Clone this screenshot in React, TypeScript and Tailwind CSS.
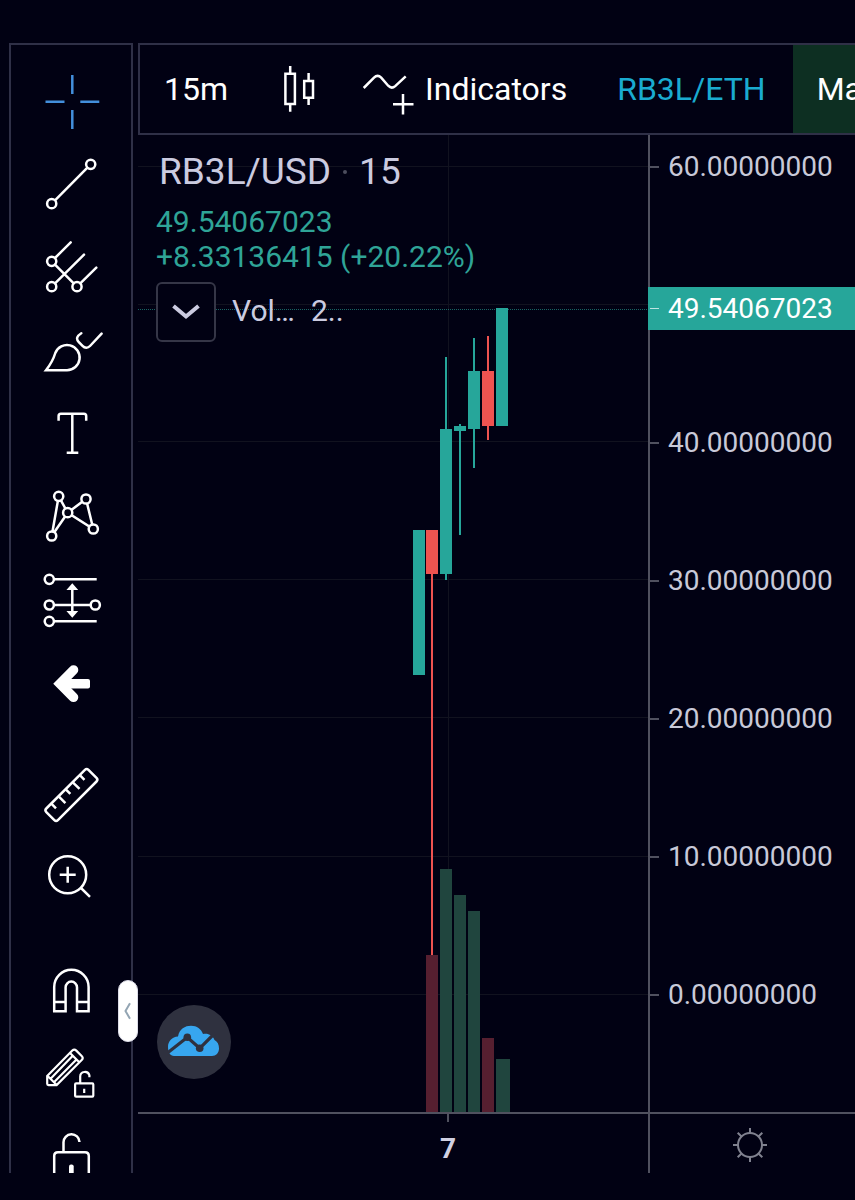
import { FC, ReactNode } from "react";

interface IconProps {
  children: ReactNode;
}

const Icon: FC<IconProps> = ({ children }) => (
  <svg
    viewBox="0 0 64 64"
    fill="none"
    stroke="currentColor"
    strokeWidth="2.5"
    aria-hidden="true"
    className="size-16 shrink-0"
  >
    {children}
  </svg>
);

interface Tool {
  label: string;
  active?: boolean;
  icon: ReactNode;
}

const drawingTools: Tool[] = [
  {
    label: "Cross",
    active: true,
    icon: <path d="M33.3 6v19M33.3 41v19M6.5 32.7h19M41.3 32.7h19" />,
  },
  {
    label: "Trend line",
    icon: (
      <>
        <circle cx="51.7" cy="12.3" r="4.6" />
        <circle cx="12.7" cy="51.7" r="4.6" />
        <path d="M16 48.4 48.4 15.6" />
      </>
    ),
  },
  {
    label: "Pitchfork",
    icon: (
      <>
        <circle cx="12.7" cy="26.3" r="4.6" />
        <circle cx="12.7" cy="51.7" r="4.6" />
        <circle cx="38" cy="51.7" r="4.6" />
        <path
          strokeLinecap="round"
          d="M16 23 31.7 7.3M16 48.4 45 19.7M41.3 48.4 57.3 32.7M16 29.6 34.7 48.4"
        />
      </>
    ),
  },
  {
    label: "Brush",
    icon: (
      <>
        <path d="M7 52.2H28A12.6 12.6 0 1 0 16.3 35C14.5 41 11.5 46.5 7 52.2z" />
        <path
          strokeLinecap="round"
          d="M42.3 15.2C38 18 36.8 20.8 39.6 23.8L43.5 27.8C45.8 30.3 48.8 30.3 51 28L62.6 15.6"
        />
      </>
    ),
  },
  {
    label: "Text",
    icon: (
      <path d="M19.6 19.8V15q0-2.3 2.3-2.3h23q2.3 0 2.3 2.3v4.8M33.3 12.7v39M27.7 51.7h11.6" />
    ),
  },
  {
    label: "Pattern",
    icon: (
      <>
        <path d="M19.7 12.3 28.7 28.7 47 15 54.3 45 28.7 28.7 12.7 52z" />
        <g className="fill-[#010113]">
          <circle cx="19.7" cy="12.3" r="4.6" />
          <circle cx="28.7" cy="28.7" r="4.6" />
          <circle cx="47" cy="15" r="4.6" />
          <circle cx="54.3" cy="45" r="4.6" />
          <circle cx="12.7" cy="52" r="4.6" />
        </g>
      </>
    ),
  },
  {
    label: "Projection",
    icon: (
      <>
        <circle cx="10.3" cy="12.3" r="4.6" />
        <circle cx="10.3" cy="38" r="4.6" />
        <circle cx="56.3" cy="38" r="4.6" />
        <circle cx="10.3" cy="54.3" r="4.6" />
        <path d="M15 12.3h42.7M15 38h36.7M15 54.3h42.7M33.3 20v27" />
        <path
          fill="currentColor"
          stroke="none"
          d="m33.3 16.3 5.9 6.6H27.4zM33.3 50.7l5.9-6.6H27.4z"
        />
      </>
    ),
  },
  {
    label: "Arrow",
    icon: (
      <>
        <path strokeWidth="9.6" strokeLinecap="round" d="M34.5 20 21 33.7 34.5 47.3" />
        <rect x="22" y="29" width="29" height="9.4" rx="2" fill="currentColor" stroke="none" />
      </>
    ),
  },
];

const measureTools: Tool[] = [
  {
    label: "Measure",
    icon: (
      <g transform="translate(32.4 32) rotate(-45)">
        <rect x="-29.8" y="-8.2" width="59.6" height="16.4" rx="2.5" />
        <path d="M-20.3-8v6.5M-10-8v9.5M0-8v6.5M10-8v9.5M20-8v6.5" />
      </g>
    ),
  },
  {
    label: "Zoom in",
    icon: (
      <>
        <circle cx="28.7" cy="28.7" r="18.5" />
        <path d="M42 42 51 50.8M28.7 20.7v16M20.7 28.7h16" />
      </>
    ),
  },
];

const lockTools: Tool[] = [
  {
    label: "Magnet mode",
    icon: (
      <path d="M15.2 52.2V28a17.2 17.2 0 0 1 34.4 0v24.2H38V28.3a5.7 5.7 0 0 0-11.4 0v23.9zM15.2 43h11.4M38 43h11.6" />
    ),
  },
  {
    label: "Stay in drawing mode",
    icon: (
      <g strokeWidth="2.2">
        <path d="M8.2 34 33.3 8.6q2-2 4 0l5.4 5.4q2 2 0 4L17.6 43.1H9.500q-1.3 0-1.3-1.3zM8.4 33.8l9.4 9.2M31 11l9.3 9.3M11.800 36.500 33.500 14M15.200 40 37.500 17.500" />
        <rect x="36.1" y="41.4" width="18.2" height="13.3" rx="1" />
        <path d="M41.2 41v-6.5a4.7 4.7 0 0 1 9.2-1.2v1.9M45.2 46.7v4.4" />
      </g>
    ),
  },
  {
    label: "Lock all drawings",
    icon: (
      <>
        <path d="M15.2 64V31q0-3.8 3.8-3.8h27q3.8 0 3.8 3.8v33M24.5 27V17.5a8 8 0 0 1 16-.5" />
        <rect x="30" y="39.6" width="4.7" height="12" rx="2" fill="currentColor" stroke="none" />
      </>
    ),
  },
];

const ToolGroup: FC<{ tools: Tool[] }> = ({ tools }) => (
  <div className="flex flex-col gap-[19px]">
    {tools.map(({ label, active, icon }) => (
      <button
        key={label}
        type="button"
        aria-label={label}
        className={active ? "text-[#438fdc]" : "text-white"}
      >
        <Icon>{icon}</Icon>
      </button>
    ))}
  </div>
);

const Sidebar: FC = () => (
  <aside className="relative w-[124px] shrink-0">
    <div className="flex h-full flex-col items-center gap-[49px] overflow-hidden border-x-2 border-t-2 border-[#2f3047] pt-6">
      <ToolGroup tools={drawingTools} />
      <ToolGroup tools={measureTools} />
      <ToolGroup tools={lockTools} />
    </div>
    <button
      type="button"
      aria-label="Hide drawings toolbar"
      className="absolute -right-[5px] bottom-[131px] z-10 flex h-[62px] w-5 items-center justify-center rounded-full border border-[#dcdce8] bg-white text-[#93a5b3]"
    >
      <svg viewBox="0 0 8 18" fill="none" stroke="currentColor" strokeWidth="2" className="h-[18px] w-2">
        <path d="M6 1.2 1.5 9 6 16.800" />
      </svg>
    </button>
  </aside>
);

const Toolbar: FC = () => (
  <header className="flex h-[92px] items-center overflow-hidden border-y-2 border-l-2 border-[#2f3047] pl-6 text-[32px] text-white">
    <button type="button">15m</button>
    <button type="button" aria-label="Candles" className="ml-10">
      <Icon>
        <path d="M17.4 16.7h9.5V47h-9.5zM22.2 9v7.7M22.2 47v7.8M36.2 24H45v16.7h-8.800zM40.6 16v8M40.6 40.7V48" />
      </Icon>
    </button>
    <button type="button" className="ml-6 flex items-center gap-[5px]">
      <Icon>
        <path d="M7.7 31 18 20.7q3.6-3.6 7.2 0l7 8q3.4 3.6 7 .4L49.7 19.3M47 37v20.5M37 47.2h20.5" />
      </Icon>
      Indicators
    </button>
    <button type="button" className="ml-[50px] text-[#1aabd0]">
      RB3L/ETH
    </button>
    <button type="button" className="ml-[27px] h-full flex-1 overflow-hidden bg-[#0d2f22] pl-6 text-left">
      Ma
    </button>
  </header>
);

const TEAL = "#26a69a";
const RED = "#ef5350";

// pixel rows inside the plot: body top/bottom, wick top/bottom, volume top
const candles = [
  { x: 275, top: 395, bottom: 540, high: 395, low: 540, volume: null, up: true },
  { x: 288, top: 395, bottom: 439, high: 395, low: 820, volume: 820, up: false },
  { x: 302, top: 294, bottom: 439, high: 222, low: 445, volume: 734, up: true },
  { x: 316, top: 291, bottom: 296, high: 289, low: 400, volume: 760, up: true },
  { x: 330, top: 236, bottom: 294, high: 203, low: 333, volume: 776, up: true },
  { x: 344, top: 236, bottom: 291, high: 201, low: 305, volume: 903, up: false },
  { x: 358, top: 173, bottom: 291, high: 173, low: 291, volume: 924, up: true },
];

const gridRows = [32, 170, 307, 445, 583, 722, 860];

const Plot: FC = () => (
  <svg className="block h-full w-full" aria-label="RB3L/USD price chart">
    <g stroke="#11121f">
      {gridRows.map((y) => (
        <line key={y} x1="0" x2="100%" y1={y - 0.5} y2={y - 0.5} />
      ))}
      <line x1="310.5" x2="310.5" y1="0" y2="100%" />
    </g>
    <line x1="0" x2="100%" y1="174.5" y2="174.5" stroke={TEAL} strokeOpacity="0.6" strokeDasharray="1 1" />
    {candles.map(({ x, top, bottom, high, low, volume, up }, i) => (
      <g key={x} fill={up ? TEAL : RED}>
        {volume && (
          <rect
            x={x}
            y={volume}
            width={i === candles.length - 1 ? 14 : 12}
            height={977 - volume}
            fill={up ? "#20453e" : "#561f30"}
          />
        )}
        <rect x={x + 5} y={high} width="2" height={low - high} />
        <rect x={x} y={top} width="12" height={bottom - top} />
      </g>
    ))}
  </svg>
);

const Legend: FC = () => (
  <div className="absolute left-[18px] top-[15px] text-[#cbcbe0]">
    <h1 className="flex items-center gap-3 pl-[3px] text-[37px] leading-[44px]">
      RB3L/USD <span className="size-1 rounded-full bg-[#4c4d5e]" /> 15
    </h1>
    <div className="mt-[10px] text-[30px] leading-[35px] text-[#2fa497]">
      <div>49.54067023</div>
      <div>+8.33136415 (+20.22%)</div>
    </div>
    <div className="mt-2 flex items-center gap-4 text-[30px]">
      <button
        type="button"
        aria-label="Collapse legend"
        className="flex size-[60px] items-center justify-center rounded-md border-2 border-[#353647] bg-[#010113]"
      >
        <svg viewBox="0 0 28 16" fill="none" stroke="currentColor" strokeWidth="4" className="h-4 w-7">
          <path d="m1.5 2 12.500 10.500L26.500 2" />
        </svg>
      </button>
      <span className="pb-1">Vol…</span>
      <span className="pb-1">2..</span>
    </div>
  </div>
);

const Watermark: FC = () => (
  <a
    href="#"
    aria-label="Charting by TradingView"
    className="absolute bottom-[33px] left-[19px] size-[74px] rounded-full bg-[#2f313f]"
  >
    <svg viewBox="0 0 74 74" className="size-full">
      <path
        fill="#37a6ef"
        d="M17 51c-4 0-6-4-6-9 0-6 4-10 10-10.5C22.5 24 28 20.8 34 20.8c6 0 10 3.2 12 8.2 5-1 9.500 1 11.500 6 3 1.500 4.500 4.500 4.500 8.500 0 4.500-3 7.500-7 7.500z"
      />
      <path d="M11 47.5 30.3 32.3 42.7 43.3 58 28" fill="none" stroke="#2f313f" strokeWidth="3.2" />
      <g fill="#2f313f">
        <circle cx="30.3" cy="32.3" r="3.8" />
        <circle cx="42.7" cy="43.3" r="3.8" />
      </g>
    </svg>
  </a>
);

const prices = [
  "60.00000000",
  null,
  "40.00000000",
  "30.00000000",
  "20.00000000",
  "10.00000000",
  "0.00000000",
];

const PriceAxis: FC = () => (
  <div className="w-[207px] shrink-0 border-l-2 border-[#50515f] pt-[14px] text-[28px] text-[#c8c9d8]">
    {prices.map((price) => (
      <div key={price ?? "last"} className="h-[138px]">
        {price ? (
          <div className="flex h-9 items-center gap-[9px]">
            <span className="h-[2px] w-[9px] bg-[#50515f]" />
            {price}
          </div>
        ) : (
          // current price tag, takes the place of the 50 label
          <div className="-ml-[2px] flex h-[43px] items-center gap-[9px] bg-[#26a69a] pl-[2px] text-white">
            <span className="h-px w-[9px] bg-white/70" />
            49.54067023
          </div>
        )}
      </div>
    ))}
  </div>
);

const TimeAxis: FC = () => (
  <div className="flex h-[61px] shrink-0 border-t-2 border-[#50515f]">
    <div className="flex-1 pl-[300px]">
      <div className="flex w-5 flex-col items-center text-[28px] font-bold leading-[54px] text-[#d0d0e2]">
        <span className="h-2 w-[2px] bg-[#50515f]" />7
      </div>
    </div>
    <div className="flex w-[207px] items-center justify-center border-l-2 border-[#50515f] pr-1.5 pt-0.5">
      <button type="button" aria-label="Chart settings" className="text-[#80828f]">
        <svg viewBox="-18 -18 36 36" fill="none" stroke="currentColor" strokeWidth="2" className="size-9">
          <circle r="12" />
          <path d="M0-12v-5M0 12v5M-12 0h-5M12 0h5M8.500-8.500l3.800-3.800M-8.500 8.500l-3.800 3.800M-8.500-8.500l-3.800-3.800M8.500 8.500l3.800 3.800" />
        </svg>
      </button>
    </div>
  </div>
);

const App: FC = () => (
  <div className="flex h-screen gap-[5px] overflow-hidden bg-[#010113] pb-[27px] pl-[9px] pt-[43px] font-['Roboto',sans-serif]">
    <Sidebar />
    <main className="flex min-w-0 flex-1 flex-col">
      <Toolbar />
      <div className="flex min-h-0 flex-1">
        <section className="relative min-w-0 flex-1 overflow-hidden">
          <Plot />
          <Legend />
          <Watermark />
        </section>
        <PriceAxis />
      </div>
      <TimeAxis />
    </main>
  </div>
);

export default App;
